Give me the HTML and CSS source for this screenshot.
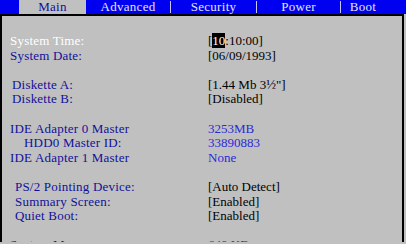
FILE: index.html
```html
<!DOCTYPE html>
<html lang="en">
<head>
    <meta charset="UTF-8">
    <title>BIOS Setup - Main</title>
    <link rel="stylesheet" href="styles.css">
</head>
<body>
    <!-- Top menu bar -->
    <div class="menubar">
        <div class="tab tab-main active">Main</div>
        <div class="tab tab-advanced sep">Advanced</div>
        <div class="tab tab-security sep">Security</div>
        <div class="tab tab-power sep">Power</div>
        <div class="tab tab-boot">Boot</div>
    </div>

    <!-- Main settings panel -->
    <div class="panel">
        <div class="group">
            <div class="row current"><span class="label">System Time:</span><span class="value">[<span class="cursor">10</span>:10:00]</span></div>
            <div class="row"><span class="label">System Date:</span><span class="value">[06/09/1993]</span></div>
        </div>

        <div class="group">
            <div class="row"><span class="label indent-sm">Diskette A:</span><span class="value">[1.44 Mb 3½"]</span></div>
            <div class="row"><span class="label indent-sm">Diskette B:</span><span class="value">[Disabled]</span></div>
        </div>

        <div class="group">
            <div class="row"><span class="label">IDE Adapter 0 Master</span><span class="value info">3253MB</span></div>
            <div class="row"><span class="label indent-lg">HDD0 Master ID:</span><span class="value info">33890883</span></div>
            <div class="row"><span class="label">IDE Adapter 1 Master</span><span class="value info">None</span></div>
        </div>

        <div class="group">
            <div class="row"><span class="label indent-md">PS/2 Pointing Device:</span><span class="value">[Auto Detect]</span></div>
            <div class="row"><span class="label indent-md">Summary Screen:</span><span class="value">[Enabled]</span></div>
            <div class="row"><span class="label indent-md">Quiet Boot:</span><span class="value">[Enabled]</span></div>
        </div>

        <div class="group">
            <div class="row"><span class="label">System Memory:</span><span class="value info">640 KB</span></div>
        </div>
    </div>
</body>
</html>
```

FILE: styles.css
```css
/* General Reset */
body, html {
    margin: 0;
    padding: 0;
    width: 406px;
    height: 244px;
    overflow: hidden;
    background: #c0c0c0;
    font-family: "Liberation Serif", "Times New Roman", serif;
    font-size: 13px;
}

/* Menu bar */
.menubar {
    display: flex;
    height: 14px;
    line-height: 14px;
    padding-left: 19px;
    background: #0000f0;
    color: #e4e4f4;
    white-space: nowrap;
}

.tab {
    flex: none;
    text-align: center;
    box-sizing: border-box;
    letter-spacing: 0.3px;
}

.tab.active {
    background: #c0c0c0;
    color: #10109a;
}

.tab.sep {
    border-right: 1px solid #c8c8f0;
    height: 12px;
    margin-top: 1px;
    line-height: 12px;
}

.tab-main { width: 67px; }
.tab-advanced { width: 85px; }
.tab-security { width: 86px; }
.tab-power { width: 84px; }
.tab-boot { width: 44px; }

/* Settings panel */
.panel {
    border-top: 2px solid #000;
    border-left: 2px solid #000;
    border-right: 2px solid #000;
    margin-right: 2px;
    padding: 18px 0 0 8px;
    height: 228px;
    box-sizing: border-box;
    overflow: hidden;
}

.group + .group {
    margin-top: 14.6px;
}

.row {
    display: grid;
    grid-template-columns: 198px auto;
    line-height: 14.6px;
    white-space: nowrap;
}

.label {
    color: #10109a;
    letter-spacing: 0.2px;
}

.row.current .label {
    color: #ffffff;
}

.indent-sm { padding-left: 2px; }
.indent-md { padding-left: 5px; }
.indent-lg { padding-left: 14px; }

.value {
    color: #000;
}

.value.info {
    color: #2a2ad8;
}

.cursor {
    background: #000;
    color: #fff;
}
```
